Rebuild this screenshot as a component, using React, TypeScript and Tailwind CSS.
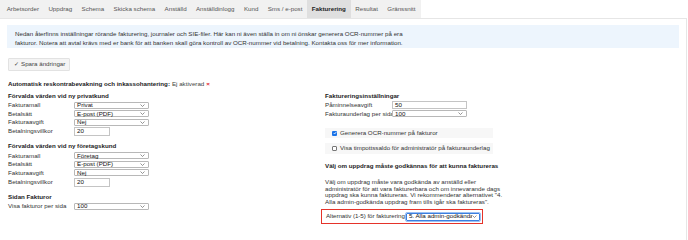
import React from "react";

const tabs = [
  "Arbetsorder",
  "Uppdrag",
  "Schema",
  "Skicka schema",
  "Anställd",
  "Anställdinlogg",
  "Kund",
  "Sms / e-post",
  "Fakturering",
  "Resultat",
  "Gränssnitt",
];

function Chevron() {
  return (
    <svg width="5" height="3" viewBox="0 0 5 3" className="shrink-0">
      <polyline points="0.5,0.5 2.5,2.5 4.5,0.5" fill="none" stroke="#666" strokeWidth="0.7" />
    </svg>
  );
}

function Select({ value, width = "w-[75px]" }: { value: string; width?: string }) {
  return (
    <div
      className={`${width} h-[7px] flex items-center justify-between border border-[#b8b8b8] rounded-[1px] bg-white pl-[2px] pr-[3px] text-[6.2px] leading-none text-[#111]`}
    >
      <span>{value}</span>
      <Chevron />
    </div>
  );
}

function Input({ value, width }: { value: string; width: string }) {
  return (
    <div
      className={`${width} h-[9px] flex items-center border border-[#c4c4c4] bg-white pl-[2px] text-[6.2px] leading-none text-[#111]`}
    >
      {value}
    </div>
  );
}

function Row({ label, children, labelWidth = "w-[66px]", h = "h-[8.5px]" }: { label: string; children: React.ReactNode; labelWidth?: string; h?: string }) {
  return (
    <div className={`flex items-center ${h}`}>
      <div className={`${labelWidth} shrink-0 whitespace-nowrap text-[6.2px] leading-none text-[#333]`}>{label}</div>
      {children}
    </div>
  );
}

function Heading({ children, className = "" }: { children: React.ReactNode; className?: string }) {
  return <div className={`h-[8px] flex items-center whitespace-nowrap text-[6.2px] font-bold leading-none text-[#222] ${className}`}>{children}</div>;
}

export default function App() {
  return (
    <div className="w-[688px] h-[240px] bg-white overflow-hidden" style={{ fontFamily: "'Liberation Sans', Arial, sans-serif" }}>
      <div className="flex h-[18px] w-fit bg-[#f1f1f1] pl-[2px] pr-[1px]">
        {tabs.map((t) => (
          <div
            key={t}
            className={`flex items-center px-[4.7px] whitespace-nowrap text-[6.2px] leading-none ${
              t === "Fakturering" ? "bg-[#dfdfdf] font-bold text-[#222]" : "text-[#555]"
            }`}
          >
            {t}
          </div>
        ))}
      </div>

      <div className="w-[687px] border-t border-r border-[#e6e6e6] h-[222px] pl-[7px] pr-[7px] pt-[6px]">
        <div className="w-[672px] h-[23px] bg-[#edf5fd] pl-[8px] pt-[5px] text-[6.2px] leading-[8.5px] text-[#333] whitespace-nowrap">
          Nedan återfinns inställningar rörande fakturering, journaler och SIE-filer. Här kan ni även ställa in om ni önskar generera OCR-nummer på era
          <br />
          fakturor. Notera att avtal krävs med er bank för att banken skall göra kontroll av OCR-nummer vid betalning. Kontakta oss för mer information.
        </div>

        <div className="mt-[10px] ml-[1px] w-[62px] h-[13px] flex items-center gap-[2px] pl-[5px] bg-[#f4f4f4] border border-[#e2e2e2] rounded-[1px] text-[6.2px] leading-none text-[#444]">
          <span>✓</span>
          <span>Spara ändringar</span>
        </div>

        <div className="mt-[9px] ml-[1px] h-[8px] flex items-center text-[6.2px] leading-none text-[#222]">
          <span className="font-bold">Automatisk reskontrabevakning och inkassohantering:</span>
          <span className="ml-[2px] text-[#444]">Ej aktiverad</span>
          <span className="ml-[2px] font-bold text-[#e0262a]">×</span>
        </div>

        <div className="flex mt-[4px] ml-[1px]">
          <div className="w-[317px]">
            <Heading>Förvalda värden vid ny privatkund</Heading>
            <div className="mt-[1px]">
              <Row label="Fakturamall"><Select value="Privat" /></Row>
              <Row label="Betalsätt"><Select value="E-post (PDF)" /></Row>
              <Row label="Fakturaavgift"><Select value="Nej" /></Row>
              <Row label="Betalningsvillkor" h="h-[10px]"><Input value="20" width="w-[36px]" /></Row>
            </div>

            <Heading className="mt-[6px]">Förvalda värden vid ny företagskund</Heading>
            <div className="mt-[1px]">
              <Row label="Fakturamall"><Select value="Företag" /></Row>
              <Row label="Betalsätt"><Select value="E-post (PDF)" /></Row>
              <Row label="Fakturaavgift"><Select value="Nej" /></Row>
              <Row label="Betalningsvillkor" h="h-[10px]"><Input value="20" width="w-[36px]" /></Row>
            </div>

            <Heading className="mt-[6px]">Sidan Fakturor</Heading>
            <div className="mt-[1px]">
              <Row label="Visa fakturor per sida"><Select value="100" /></Row>
            </div>
          </div>

          <div className="w-[172px]">
            <Heading>Faktureringsinställningar</Heading>
            <div className="mt-[1px]">
              <Row label="Påminnelseavgift" labelWidth="w-[67px]"><Input value="50" width="w-[75px] !h-[8px]" /></Row>
              <Row label="Fakturaunderlag per sida" labelWidth="w-[67px]"><Select value="100" /></Row>
            </div>

            <div className="mt-[10px] h-[10px] w-[168px] bg-[#f7f7f7] flex items-center pl-[7px] gap-[3px] text-[6.2px] leading-none text-[#333]">
              <div className="w-[5px] h-[5px] rounded-[1px] bg-[#1a73e8] flex items-center justify-center">
                <svg width="4" height="4" viewBox="0 0 4 4">
                  <polyline points="0.7,2 1.6,3 3.3,1" fill="none" stroke="white" strokeWidth="0.8" />
                </svg>
              </div>
              <span>Generera OCR-nummer på fakturor</span>
            </div>
            <div className="mt-[5px] h-[11px] w-[168px] bg-[#f7f7f7] flex items-center pl-[7px] gap-[3px] text-[6.2px] leading-none text-[#333] whitespace-nowrap">
              <div className="w-[5px] h-[5px] shrink-0 rounded-[1px] border-[0.7px] border-[#777] bg-white" />
              <span>Visa timpottssaldo för administratör på fakturaunderlag</span>
            </div>

            <Heading className="mt-[8px]">Välj om uppdrag måste godkännas för att kunna faktureras</Heading>

            <div className="mt-[9px] text-[6.2px] leading-[6.5px] text-[#333] whitespace-nowrap">
              Välj om uppdrag måste vara godkända av anställd eller
              <br />
              administratör för att vara fakturerbara och om innevarande dags
              <br />
              uppdrag ska kunna faktureras. Vi rekommenderar alternativet "4.
              <br />
              Alla admin-godkända uppdrag fram tills igår ska faktureras".
            </div>

            <div className="mt-[4px] -ml-[4px] w-[162px] h-[15px] border border-[#e5332a] flex items-center gap-[1px] pl-[4px] text-[6.2px] leading-none text-[#333]">
              <span className="whitespace-nowrap tracking-[-0.05px]">Alternativ (1-5) för fakturering</span>
              <div className="w-[74px] shrink-0 h-[8px] flex items-center border border-[#3b7fe0] rounded-[1px] outline outline-1 outline-[#9cc0f2] bg-white pl-[2px] pr-[2px] text-[#111]">
                <span className="flex-1 min-w-0 whitespace-nowrap overflow-hidden">5. Alla admin-godkända</span>
                <Chevron />
              </div>
            </div>
          </div>
        </div>
      </div>
    </div>
  );
}
